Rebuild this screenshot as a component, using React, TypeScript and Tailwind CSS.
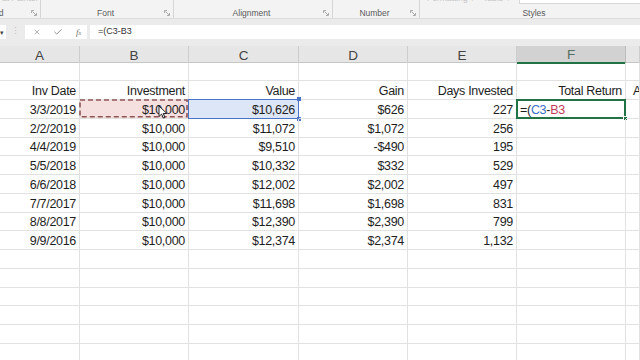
import React from 'react';
import { X, Check } from 'lucide-react';

type Row = string[];

const dataRows: Row[] = [
    ['3/3/2019', '$10,000', '$10,626', '$626', '227'],
    ['2/2/2019', '$10,000', '$11,072', '$1,072', '256'],
    ['4/4/2019', '$10,000', '$9,510', '-$490', '195'],
    ['5/5/2018', '$10,000', '$10,332', '$332', '529'],
    ['6/6/2018', '$10,000', '$12,002', '$2,002', '497'],
    ['7/7/2017', '$10,000', '$11,698', '$1,698', '831'],
    ['8/8/2017', '$10,000', '$12,390', '$2,390', '799'],
    ['9/9/2016', '$10,000', '$12,374', '$2,374', '1,132'],
];

const headers = ['Inv Date', 'Investment', 'Value', 'Gain', 'Days Invested', 'Total Return'];
const letters = ['A', 'B', 'C', 'D', 'E', 'F', 'G'];

const gridCols = 'grid grid-cols-[80px_109px_110px_109px_109px_109px_1fr]';

function Launcher() {
    return (
        <svg width="6" height="6" viewBox="0 0 6 6" className="shrink-0 mb-[1px]">
            <path d="M0.5 3V0.5H3 M5.5 3v2.5H3 M1.5 1.5l3.5 3.5" stroke="#9a9a9a" strokeWidth="0.8" fill="none" />
        </svg>
    );
}

function Ribbon() {
    return (
        <div className="h-[19px] flex bg-[#f3f3f3] border-b border-[#dcdcdc] text-[8.5px] leading-none text-[#5a5a5a] overflow-hidden">
            <div className="w-[41px] flex flex-col border-r border-[#d6d6d6]">
                <div className="-mt-[6px] h-[9px] leading-[9px] pl-[2px] text-[#c4c4c4] whitespace-nowrap">at Painter</div>
                <div className="flex-1 flex items-end pb-[1px] pr-[3px]">
                    <span className="-ml-[33px] shrink-0">Clipboard</span>
                    <div className="flex-1" />
                    <Launcher />
                </div>
            </div>
            <div className="w-[133px] flex items-end pb-[1px] pr-[3px] border-r border-[#d6d6d6]">
                <div className="w-[6px]" />
                <span className="flex-1 text-center">Font</span>
                <Launcher />
            </div>
            <div className="w-[159px] flex items-end pb-[1px] pr-[3px] border-r border-[#d6d6d6]">
                <div className="w-[6px]" />
                <span className="flex-1 text-center">Alignment</span>
                <Launcher />
            </div>
            <div className="w-[87px] flex items-end pb-[1px] pr-[3px] border-r border-[#d6d6d6]">
                <div className="w-[6px]" />
                <span className="flex-1 text-center">Number</span>
                <Launcher />
            </div>
            <div className="flex-1 flex flex-col">
                <div className="-mt-[6px] h-[10px] flex items-start">
                    <span className="ml-[7px] leading-[9px] text-[#c4c4c4] whitespace-nowrap">Formatting ▾</span>
                    <span className="ml-[8px] leading-[9px] text-[#c4c4c4] whitespace-nowrap">Table ▾</span>
                    <div className="ml-[8px] flex-1 h-full bg-white border-l border-b border-[#d8d8d8]" />
                </div>
                <div className="flex-1 flex items-end justify-center pb-[1px] pl-[8px]">Styles</div>
            </div>
        </div>
    );
}

function FormulaBar() {
    return (
        <div className="h-[27px] bg-[#ebebeb] pt-[6px]">
            <div className="h-[14px] flex">
                <div className="w-[6px] bg-white flex items-center text-[7px] text-[#444] leading-none">▾</div>
                <div className="w-[19px] flex items-center justify-center text-[9px] text-[#c0c0c0]">⋮</div>
                <div className="w-[62px] bg-white flex items-center text-[#707070]">
                    <X size={8} strokeWidth={1.6} className="ml-[8px]" />
                    <Check size={10} strokeWidth={1.8} className="ml-[12px]" />
                    <span className="ml-[13px] text-[9px] italic font-['Liberation_Serif',serif] leading-none">
                        f<span className="text-[6px]">x</span>
                    </span>
                </div>
                <div className="w-[3px]" />
                <div className="flex-1 bg-white flex items-center pl-[8px] text-[9px] text-[#333]">=(C3-B3</div>
            </div>
        </div>
    );
}

function ColumnHeaders() {
    return (
        <div className={`${gridCols} h-[16.5px] bg-[#e6e6e6] border-b border-[#c6c6c6] text-[13.5px] text-[#444]`}>
            {letters.map((l) =>
                l === 'F' ? (
                    <div key={l} className="bg-[#d2d2d2] border-r border-[#bdbdbd] border-b-2 border-b-[#217346] flex items-center justify-center text-[#56705f] leading-none pt-[2px]">
                        {l}
                    </div>
                ) : (
                    <div key={l} className="border-r border-[#cdcdcd] flex items-center justify-center leading-none pt-[1px]">
                        {l === 'G' ? '' : l}
                    </div>
                )
            )}
        </div>
    );
}

function Cursor() {
    return (
        <svg width="10" height="14" viewBox="0 0 10 14" className="absolute left-[78px] top-[5px]">
            <path d="M1 1v10.5l2.6-2.4 1.8 4 1.6-0.7-1.8-3.9H8.8z" fill="#fff" stroke="#111" strokeWidth="0.9" strokeLinejoin="round" />
        </svg>
    );
}

function Cell({ children, col, row }: { children?: React.ReactNode; col: number; row: number }) {
    const base = 'relative border-r border-b border-[#e1e1e1] flex items-end justify-end pr-[3px] whitespace-nowrap leading-[15px]';

    if (row === 3 && col === 1) {
        return (
            <div className={`${base} bg-[#f5dfdf]`}>
                <svg className="absolute -left-px -top-px w-[calc(100%+1px)] h-[calc(100%+1px)]" preserveAspectRatio="none">
                    <rect x="1" y="1" width="calc(100% - 2px)" height="calc(100% - 2px)" fill="none" stroke="#8f5656" strokeWidth="1.6" strokeDasharray="5 3" />
                </svg>
                <span className="relative">{children}</span>
                <Cursor />
            </div>
        );
    }
    if (row === 3 && col === 2) {
        return (
            <div className={`${base} bg-[#dde6f6]`}>
                <div className="absolute -left-px -top-px -right-px -bottom-px border-[1.5px] border-[#4a74c6]" />
                <div className="absolute -right-[3px] -top-[3px] w-[4px] h-[4px] bg-[#4a74c6]" />
                <div className="absolute -right-[3px] -bottom-[3px] w-[4px] h-[4px] bg-[#4a74c6]" />
                <span className="relative">{children}</span>
            </div>
        );
    }
    if (row === 3 && col === 5) {
        return (
            <div className={`${base} justify-start pl-[3px]`}>
                <div className="absolute -left-px -top-px -right-px -bottom-px border-2 border-[#217346]" />
                <div className="absolute -right-[3px] -bottom-[3px] w-[5px] h-[5px] bg-[#217346] border border-white" />
                <span className="relative">
                    =(<span className="text-[#3a6fc6]">C3</span>-<span className="text-[#c23d5a]">B3</span>
                </span>
            </div>
        );
    }
    if (col === 6) {
        return <div className={`${base} justify-start pl-[7px] overflow-hidden`}>{children}</div>;
    }
    return <div className={`${base} overflow-hidden`}>{children}</div>;
}

export default function App() {
    const rows: Row[] = [
        [],
        [...headers, 'Annualized Return'],
        ...dataRows.map((r, i) => (i === 0 ? [...r, ''] : r)),
        [], [], [], [], [], [],
    ];

    return (
        <div className="w-[640px] h-[360px] overflow-hidden bg-white font-['Liberation_Sans',sans-serif]">
            <Ribbon />
            <FormulaBar />
            <ColumnHeaders />
            <div className="text-[12.5px] tracking-[-0.3px] text-[#1e1e1e]">
                {rows.map((r, ri) => (
                    <div key={ri} className={`${gridCols} h-[18.75px]`}>
                        {letters.map((_, ci) => (
                            <Cell key={ci} col={ci} row={ri + 1}>
                                {r[ci] ?? ''}
                            </Cell>
                        ))}
                    </div>
                ))}
            </div>
        </div>
    );
}
